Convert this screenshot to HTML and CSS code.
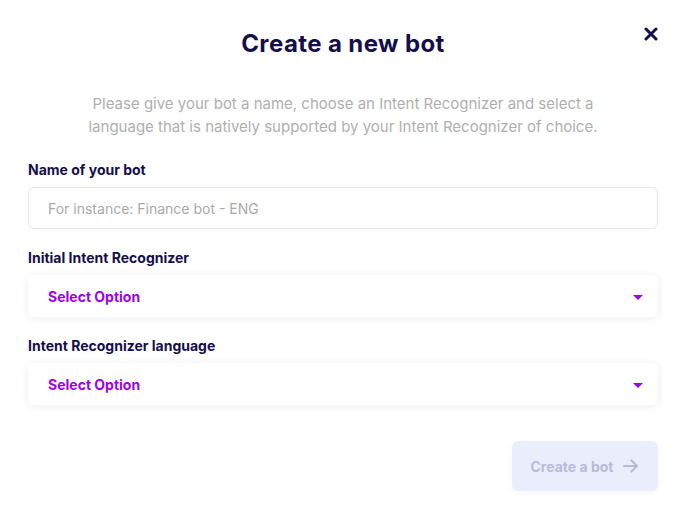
FILE: index.html
```html
<!DOCTYPE html>
<html>
<head>
<meta charset="utf-8">
<link rel="stylesheet" href="styles.css">
</head>
<body>
<div class="modal">
  <button class="close" aria-label="Close">
    <svg width="14" height="14" viewBox="0 0 14 14"><path d="M2 2L12 12M12 2L2 12" stroke="#140f4b" stroke-width="3" stroke-linecap="round"/></svg>
  </button>
  <h1 class="title">Create a new bot</h1>
  <p class="subtitle">Please give your bot a name, choose an Intent Recognizer and select a language that is natively supported by your Intent Recognizer of choice.</p>
  <div class="field">
    <label class="label">Name of your bot</label>
    <div class="input">For instance: Finance bot - ENG</div>
  </div>
  <div class="field">
    <label class="label">Initial Intent Recognizer</label>
    <div class="select"><span>Select Option</span><span class="caret"></span></div>
  </div>
  <div class="field">
    <label class="label">Intent Recognizer language</label>
    <div class="select"><span>Select Option</span><span class="caret"></span></div>
  </div>
  <div class="actions">
    <button class="submit">Create a bot
      <svg width="16" height="14" viewBox="0 0 16 14"><path d="M1 7H14M8.5 1.5L14 7L8.5 12.5" fill="none" stroke="#b9bad8" stroke-width="2.2" stroke-linecap="round" stroke-linejoin="round"/></svg>
    </button>
  </div>
</div>
</body>
</html>
```
FILE: styles.css
```css
html, body { margin: 0; padding: 0; background: #fff; }
body { font-family: "Inter", "Lato", sans-serif; width: 686px; height: 508px; overflow: hidden; }
.modal { position: relative; padding: 28px 28px 0 28px; box-sizing: border-box; }
.close { position: absolute; top: 27px; right: 28px; border: 0; background: none; padding: 0; width: 14px; height: 14px; cursor: pointer; }
.close svg { display: block; }
.title { margin: 0; text-align: center; font-size: 24px; font-weight: 700; color: #140f4b; line-height: 32px; letter-spacing: 0.4px; }
.subtitle { margin: 32px auto 0; width: 550px; text-align: center; font-size: 15px; line-height: 23px; color: #b0b0b0; }
.field { display: flex; flex-direction: column; }
.subtitle + .field { margin-top: 23px; }
.field + .field { margin-top: 20px; }
.label { font-size: 14px; font-weight: 700; color: #140f4b; line-height: 18px; margin-bottom: 8px; }
.input { height: 42px; box-sizing: border-box; border: 1px solid #e2e5f6; border-radius: 6px; padding: 0 19px; display: flex; align-items: center; font-size: 14px; color: #a9a9a9; }
.select { height: 42px; box-sizing: border-box; border-radius: 6px; background: #fff; box-shadow: 0 1px 8px rgba(20, 15, 75, 0.08); padding: 0 15px 0 20px; display: flex; align-items: center; justify-content: space-between; font-size: 14px; font-weight: 700; color: #a000f0; }
.caret { width: 0; height: 0; border-left: 5px solid transparent; border-right: 5px solid transparent; border-top: 5px solid #a000f0; margin-top: 2px; }
.actions { display: flex; justify-content: flex-end; margin-top: 36px; }
.submit { width: 146px; height: 50px; border: 0; border-radius: 6px; background: #eaedfc; color: #b9bad8; font-family: inherit; font-size: 14px; font-weight: 700; display: flex; align-items: center; justify-content: center; gap: 10px; box-shadow: 0 2px 8px rgba(20, 15, 75, 0.04); padding: 0; }
.submit svg { display: block; }
```
